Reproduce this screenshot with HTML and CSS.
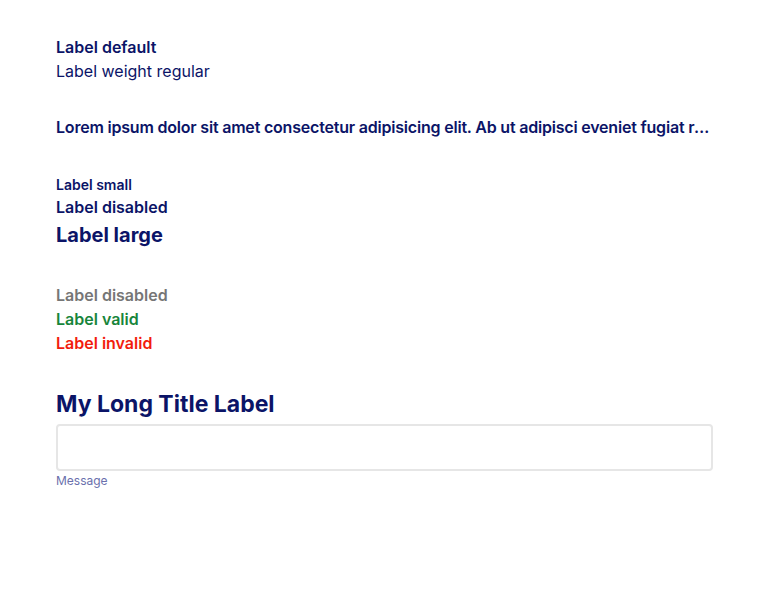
FILE: index.html
```html
<!DOCTYPE html>
<html>
<head>
<meta charset="utf-8">
<link rel="stylesheet" href="styles.css">
</head>
<body>
<main class="page">
  <section class="group g1">
    <div class="label bold">Label default</div>
    <div class="label regular">Label weight regular</div>
  </section>
  <section class="group g2">
    <div class="label bold truncate">Lorem ipsum dolor sit amet consectetur adipisicing elit. Ab ut adipisci eveniet fugiat recusandae quibusdam voluptatem, ipsum rerum.</div>
  </section>
  <section class="group g3">
    <div class="label bold small">Label small</div>
    <div class="label bold">Label disabled</div>
    <div class="label bold large">Label large</div>
  </section>
  <section class="group g4">
    <div class="label bold disabled">Label disabled</div>
    <div class="label bold valid">Label valid</div>
    <div class="label bold invalid">Label invalid</div>
  </section>
  <section class="group g5">
    <div class="label title">My Long Title Label</div>
    <div class="input"></div>
    <div class="message">Message</div>
  </section>
</main>
</body>
</html>
```
FILE: styles.css
```css
html, body {
  margin: 0;
  padding: 0;
  background: #ffffff;
}
body {
  font-family: Inter, "Noto Sans", sans-serif;
  color: #0b1467;
}
.page {
  padding: 35px 56px 0 56px;
  display: flex;
  flex-direction: column;
}
.group {
  display: flex;
  flex-direction: column;
}
.g2 { margin-top: 32px; }
.g3 { margin-top: 35px; }
.g4 { margin-top: 32px; }
.g5 { margin-top: 33px; }
.label {
  font-size: 16px;
  line-height: 24px;
  color: #0b1467;
}
.bold { font-weight: 600; }
.regular { font-weight: 400; }
.truncate {
  white-space: nowrap;
  overflow: hidden;
  text-overflow: ellipsis;
  letter-spacing: -0.2px;
}
.small {
  font-size: 14px;
  line-height: 21px;
}
.large {
  font-size: 20px;
  line-height: 32px;
  font-weight: 700;
}
.disabled { color: #767676; }
.valid { color: #17853b; }
.invalid { color: #f21c0d; }
.title {
  font-size: 23px;
  line-height: 32px;
  font-weight: 700;
}
.input {
  margin-top: 4px;
  height: 43px;
  border: 2px solid #e6e6e6;
  border-radius: 4px;
}
.message {
  margin-top: 1px;
  font-size: 12px;
  line-height: 18px;
  color: #6a70ad;
}
```
